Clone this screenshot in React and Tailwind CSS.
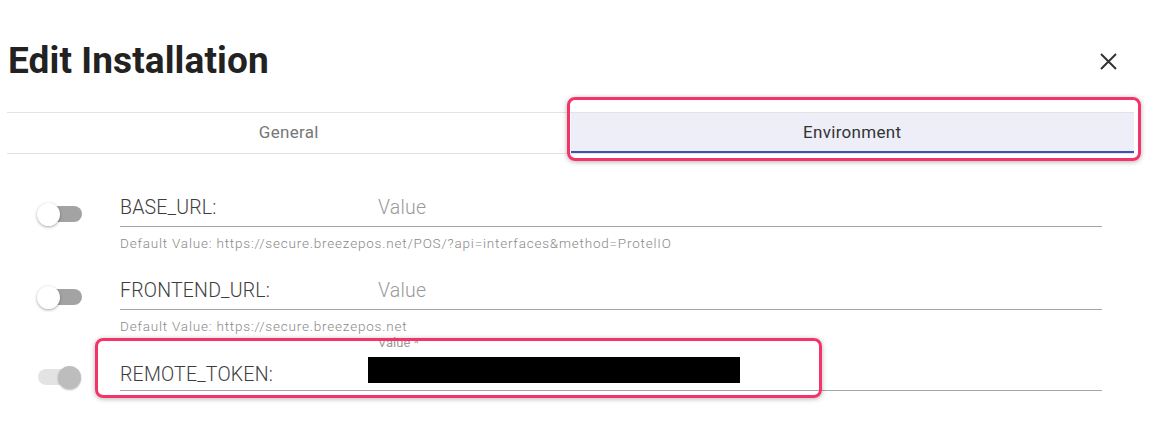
import React from "react";

function Toggle({ checked, disabled }) {
  return (
    <div className="relative w-[46px] h-[22px]">
      <div
        className={
          "absolute left-[4px] top-[3px] w-[41px] h-[16px] rounded-full " +
          (disabled ? "bg-[#e3e3e3]" : "bg-[#a3a3a3]")
        }
      />
      <div
        className={
          "absolute top-0 w-[23px] h-[23px] rounded-full " +
          (checked
            ? "left-[24px] bg-[#bdbdbd] shadow-[0_1px_2px_rgba(0,0,0,0.25)]"
            : "left-0 bg-white shadow-[0_1px_3px_rgba(0,0,0,0.35)]")
        }
      />
    </div>
  );
}

function Row({ label, helper, last }) {
  return (
    <div className={"flex " + (last ? "" : "h-[83px]")}>
      <div className="w-[120px] shrink-0 pl-[37px] pt-[13px]">
        <Toggle checked={false} />
      </div>
      <div className="flex-1 mr-[47px]">
        <div className="h-[37px] border-b border-[#a5a5a5] flex items-center">
          <div className="w-[258px] shrink-0 text-[19.5px] font-light text-[#3d3d3d] leading-none tracking-[0.2px]">
            {label}
          </div>
          <div className="text-[19.5px] font-light text-[#9a9a9a] leading-none tracking-[0.2px]">Value</div>
        </div>
        <div className="mt-[9px] text-[13.5px] leading-[15px] text-[#8a8a8a] tracking-[0.8px] font-light">{helper}</div>
      </div>
    </div>
  );
}

export default function App() {
  return (
    <div
      className="w-[1149px] h-[426px] bg-white overflow-hidden"
      style={{ fontFamily: "Roboto, 'Noto Sans', sans-serif" }}
    >
      <div className="flex items-center justify-between pt-[42px] pl-[8px] pr-[32px]">
        <h1 className="text-[37px] leading-[37px] font-bold text-[#222222] tracking-[0.1px]">
          Edit Installation
        </h1>
        <svg width="17" height="17" viewBox="0 0 17 17" className="mt-[2px]">
          <path d="M1 1 L16 16 M16 1 L1 16" stroke="#333" strokeWidth="2" />
        </svg>
      </div>

      <div className="mt-[33px] ml-[7px] mr-[15px] relative flex h-[42px] border-t border-b border-[#e3e3e3]">
        <div className="flex-1 flex items-center justify-center text-[17px] text-[#777777] tracking-[0.3px]">
          General
        </div>
        <div className="flex-1 relative flex items-center justify-center bg-[#eeeef8] text-[17px] text-[#333333] tracking-[0.3px]">
          Environment
          <div className="absolute left-0 right-0 bottom-0 h-[2px] bg-[#3f51b5]" />
          <div className="absolute left-[-4px] right-[-7px] top-[-16px] bottom-[-8px] rounded-[8px] border-[3px] border-[#f43468] shadow-[0_1px_5px_rgba(0,0,0,0.3)]" />
        </div>
      </div>

      <div className="mt-[36px]">
        <Row
          label="BASE_URL:"
          helper="Default Value: https://secure.breezepos.net/POS/?api=interfaces&method=ProtelIO"
        />
        <Row label="FRONTEND_URL:" helper="Default Value: https://secure.breezepos.net" />

        <div className="flex">
          <div className="w-[120px] shrink-0 pl-[34px] pt-[10px]">
            <Toggle checked disabled />
          </div>
          <div className="flex-1 mr-[47px] relative">
            <div className="absolute left-[258px] top-[-20px] text-[13px] leading-[13px] text-[#9a9a9a]">
              Value *
            </div>
            <div className="h-[35px] border-b border-[#a5a5a5] flex items-center">
              <div className="w-[248px] shrink-0 text-[19.5px] font-light text-[#3d3d3d] leading-none pt-[3px] tracking-[0.2px]">
                REMOTE_TOKEN:
              </div>
              <div className="w-[372px] h-[26px] bg-black self-start mt-[1px]" />
            </div>
            <div className="absolute left-[-25px] top-[-18px] w-[727px] h-[60px] rounded-[8px] border-[3px] border-[#f43468] shadow-[0_1px_5px_rgba(0,0,0,0.3)]" />
          </div>
        </div>
      </div>
    </div>
  );
}
